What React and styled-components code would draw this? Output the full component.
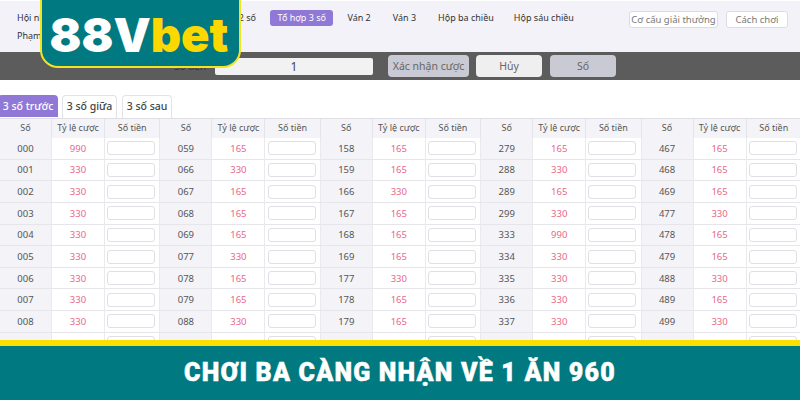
import React from "react";
import styled, { createGlobalStyle } from "styled-components";

const Global = createGlobalStyle`
  html, body { margin: 0; padding: 0; background: #fff; }
  body { font-family: "Noto Sans", "Liberation Sans", sans-serif; }
  #root { width: 800px; height: 400px; overflow: hidden; }
`;

const Page = styled.div`
  position: relative; width: 800px; height: 400px; display: flex; flex-direction: column; overflow: hidden;
`;
const Content = styled.div`
  flex: 1; min-height: 0; overflow: hidden; display: flex; flex-direction: column;
`;
const Nav = styled.div`
  height: 51px; margin-top: 1px; background: #f2f2f8; display: flex; padding: 9px 12px 0 17px; box-sizing: border-box; justify-content: space-between; flex: none;
`;
const NavList = styled.div`
  display: flex; flex-wrap: wrap; align-content: flex-start; column-gap: 14px; width: 590px; font-size: 9px; color: #333;
`;
const NavItem = styled.span`
  height: 16px; line-height: 16px; white-space: nowrap; border-radius: 3px;
  margin-right: ${p => p.$mr || 0}px;
  ${p => p.$active && `background:#8f78d6;color:#fff;padding:0 7.5px;`}
`;
const NavSpacer = styled.span`width: 152px;`;
const NavBreak = styled.div`flex-basis: 100%; height: 2px;`;
const NavActions = styled.div`display: flex; gap: 8px; align-items: flex-start; padding-top: 1px;`;
const Ghost = styled.button`
  height: 17px; padding: 0; width: ${p => p.$w}px; background: #fff; border: 1px solid #dcdce4; border-radius: 3px;
  font: 9.5px "Noto Sans", sans-serif; color: #777;
`;
const BetBar = styled.div`
  height: 28px; background: #5c5c5c; flex: none; display: flex; align-items: center; padding-left: 174px; box-sizing: border-box;
`;
const BetLabel = styled.span`font-size: 10px; color: #333; width: 41px;`;
const Amount = styled.div`
  width: 158px; height: 17px; background: #f2f2f2; border-radius: 2px; text-align: center; font-size: 12px; line-height: 17px; color: #444; margin-right: 15px;
`;
const BetBtn = styled.button`
  height: 22px; width: ${p => p.$w}px; border: none; border-radius: 4px; padding: 0; margin-right: ${p => p.$mr}px;
  background: ${p => p.$light ? "#efefef" : "#c9cad3"}; color: #666; font: 10.5px "Noto Sans", sans-serif;
`;
const Tabs = styled.div`
  display: flex; gap: 5px; padding-top: 15px; height: 23px; flex: none;
`;
const Tab = styled.div`
  height: 22px; line-height: 22px; box-sizing: border-box; width: ${p => p.$w}px; text-align: center; font-size: 10.5px; font-weight: 500;
  border-radius: 4px 4px 0 0;
  ${p => p.$active ? `background:#8f78d6;color:#fff;border:none;margin-left:-2px;margin-right:-1px;` : `background:#fff;color:#444;border:1px solid #e2e2e8;border-bottom:none;line-height:20px;height:23px;`}
`;
const Table = styled.div`
  display: grid; grid-template-columns: repeat(5, 160.4px); border-top: 1px solid #dedee4; flex: none;
`;
const Group = styled.div`
  display: grid; grid-template-columns: 52px 53px 55.4px; grid-template-rows: 19px; grid-auto-rows: 21.65px;
  border-right: 1px solid #cfcfd6; box-sizing: border-box;
  &:last-child { border-right: none; }
`;
const Head = styled.div`
  background: #f3f3f8; font-size: 9px; color: #555; display: flex; align-items: center; justify-content: center; border-right: 1px solid #e4e4ea; padding-bottom: 2px; box-sizing: border-box;
`;
const Cell = styled.div`
  display: flex; align-items: center; justify-content: center; font-size: 9.5px; border-bottom: 1px solid #e6e6ea; border-right: 1px solid #eaeaee; box-sizing: border-box;
  color: ${p => p.$odds ? "#e8688a" : "#555"}; background: ${p => p.$num ? "#f3f3f8" : "#fff"};
`;
const Stake = styled.div`
  width: 48px; height: 14px; box-sizing: border-box; border: 1px solid #dfdfe5; border-radius: 3px; background: #fff; margin-right: 2px;
`;
const Banner = styled.div`
  flex: none; height: 60px; box-sizing: border-box; background: #007a80; border-top: 6px solid #f9e000; display: flex; align-items: center; justify-content: center; padding-bottom: 2px;
`;
const Title = styled.div`
  color: #fff; font: 900 25px "Roboto", "DejaVu Sans", sans-serif; letter-spacing: 1.2px; white-space: nowrap;
  -webkit-text-stroke: 0.5px #fff;
`;
const Logo = styled.div`
  position: absolute; left: 40px; top: -10px; width: 201px; height: 78px; box-sizing: border-box; background: #007a80; border: 2.5px solid #f3e321; border-radius: 0 0 18px 18px;
  display: flex; align-items: center; justify-content: center; padding: 10px 3px 0 0;
  font: 900 47px "Inter", "Roboto", sans-serif; color: #fff;
`;
const Bet = styled.span`color: #fbd800;`;

const data = [
  [["000",990],["001",330],["002",330],["003",330],["004",330],["005",330],["006",330],["007",330],["008",330],["009",330]],
  [["059",165],["066",330],["067",165],["068",165],["069",165],["077",330],["078",165],["079",165],["088",330],["089",165]],
  [["158",165],["159",165],["166",330],["167",165],["168",165],["169",165],["177",330],["178",165],["179",165],["188",330]],
  [["279",165],["288",330],["289",165],["299",330],["333",990],["334",330],["335",330],["336",330],["337",330],["338",330]],
  [["467",165],["468",165],["469",165],["477",330],["478",165],["479",165],["488",330],["489",165],["499",330],["555",990]],
];

export default function App() {
  return (
    <Page>
      <Global />
      <Content>
        <Nav>
          <NavList>
            <NavItem>Hội nhóm</NavItem>
            <NavSpacer />
            <NavItem>2 số</NavItem>
            <NavItem $active>Tổ hợp 3 số</NavItem>
            <NavItem $mr={8}>Ván 2</NavItem>
            <NavItem $mr={8}>Ván 3</NavItem>
            <NavItem $mr={6}>Hộp ba chiều</NavItem>
            <NavItem>Hộp sáu chiều</NavItem>
            <NavBreak />
            <NavItem>Phạm vi</NavItem>
          </NavList>
          <NavActions>
            <Ghost $w={89}>Cơ cấu giải thưởng</Ghost>
            <Ghost $w={62}>Cách chơi</Ghost>
          </NavActions>
        </Nav>
        <BetBar>
          <BetLabel>Số tiền</BetLabel>
          <Amount>1</Amount>
          <BetBtn $w={81} $mr={7}>Xác nhận cược</BetBtn>
          <BetBtn $w={66} $light $mr={8}>Hủy</BetBtn>
          <BetBtn $w={66}>Số</BetBtn>
        </BetBar>
        <Tabs>
          <Tab $active $w={60}>3 số trước</Tab>
          <Tab $w={55}>3 số giữa</Tab>
          <Tab $w={50}>3 số sau</Tab>
        </Tabs>
        <Table>
          {data.map((group, i) => (
            <Group key={i}>
              <Head>Số</Head>
              <Head>Tỷ lệ cược</Head>
              <Head>Số tiền</Head>
              {group.map(([n, o]) => (
                <React.Fragment key={n}>
                  <Cell $num>{n}</Cell>
                  <Cell $odds>{o}</Cell>
                  <Cell><Stake /></Cell>
                </React.Fragment>
              ))}
            </Group>
          ))}
        </Table>
      </Content>
      <Banner><Title>CHƠI BA CÀNG NHẬN VỀ 1 ĂN 960</Title></Banner>
      <Logo>88V<Bet>bet</Bet></Logo>
    </Page>
  );
}
